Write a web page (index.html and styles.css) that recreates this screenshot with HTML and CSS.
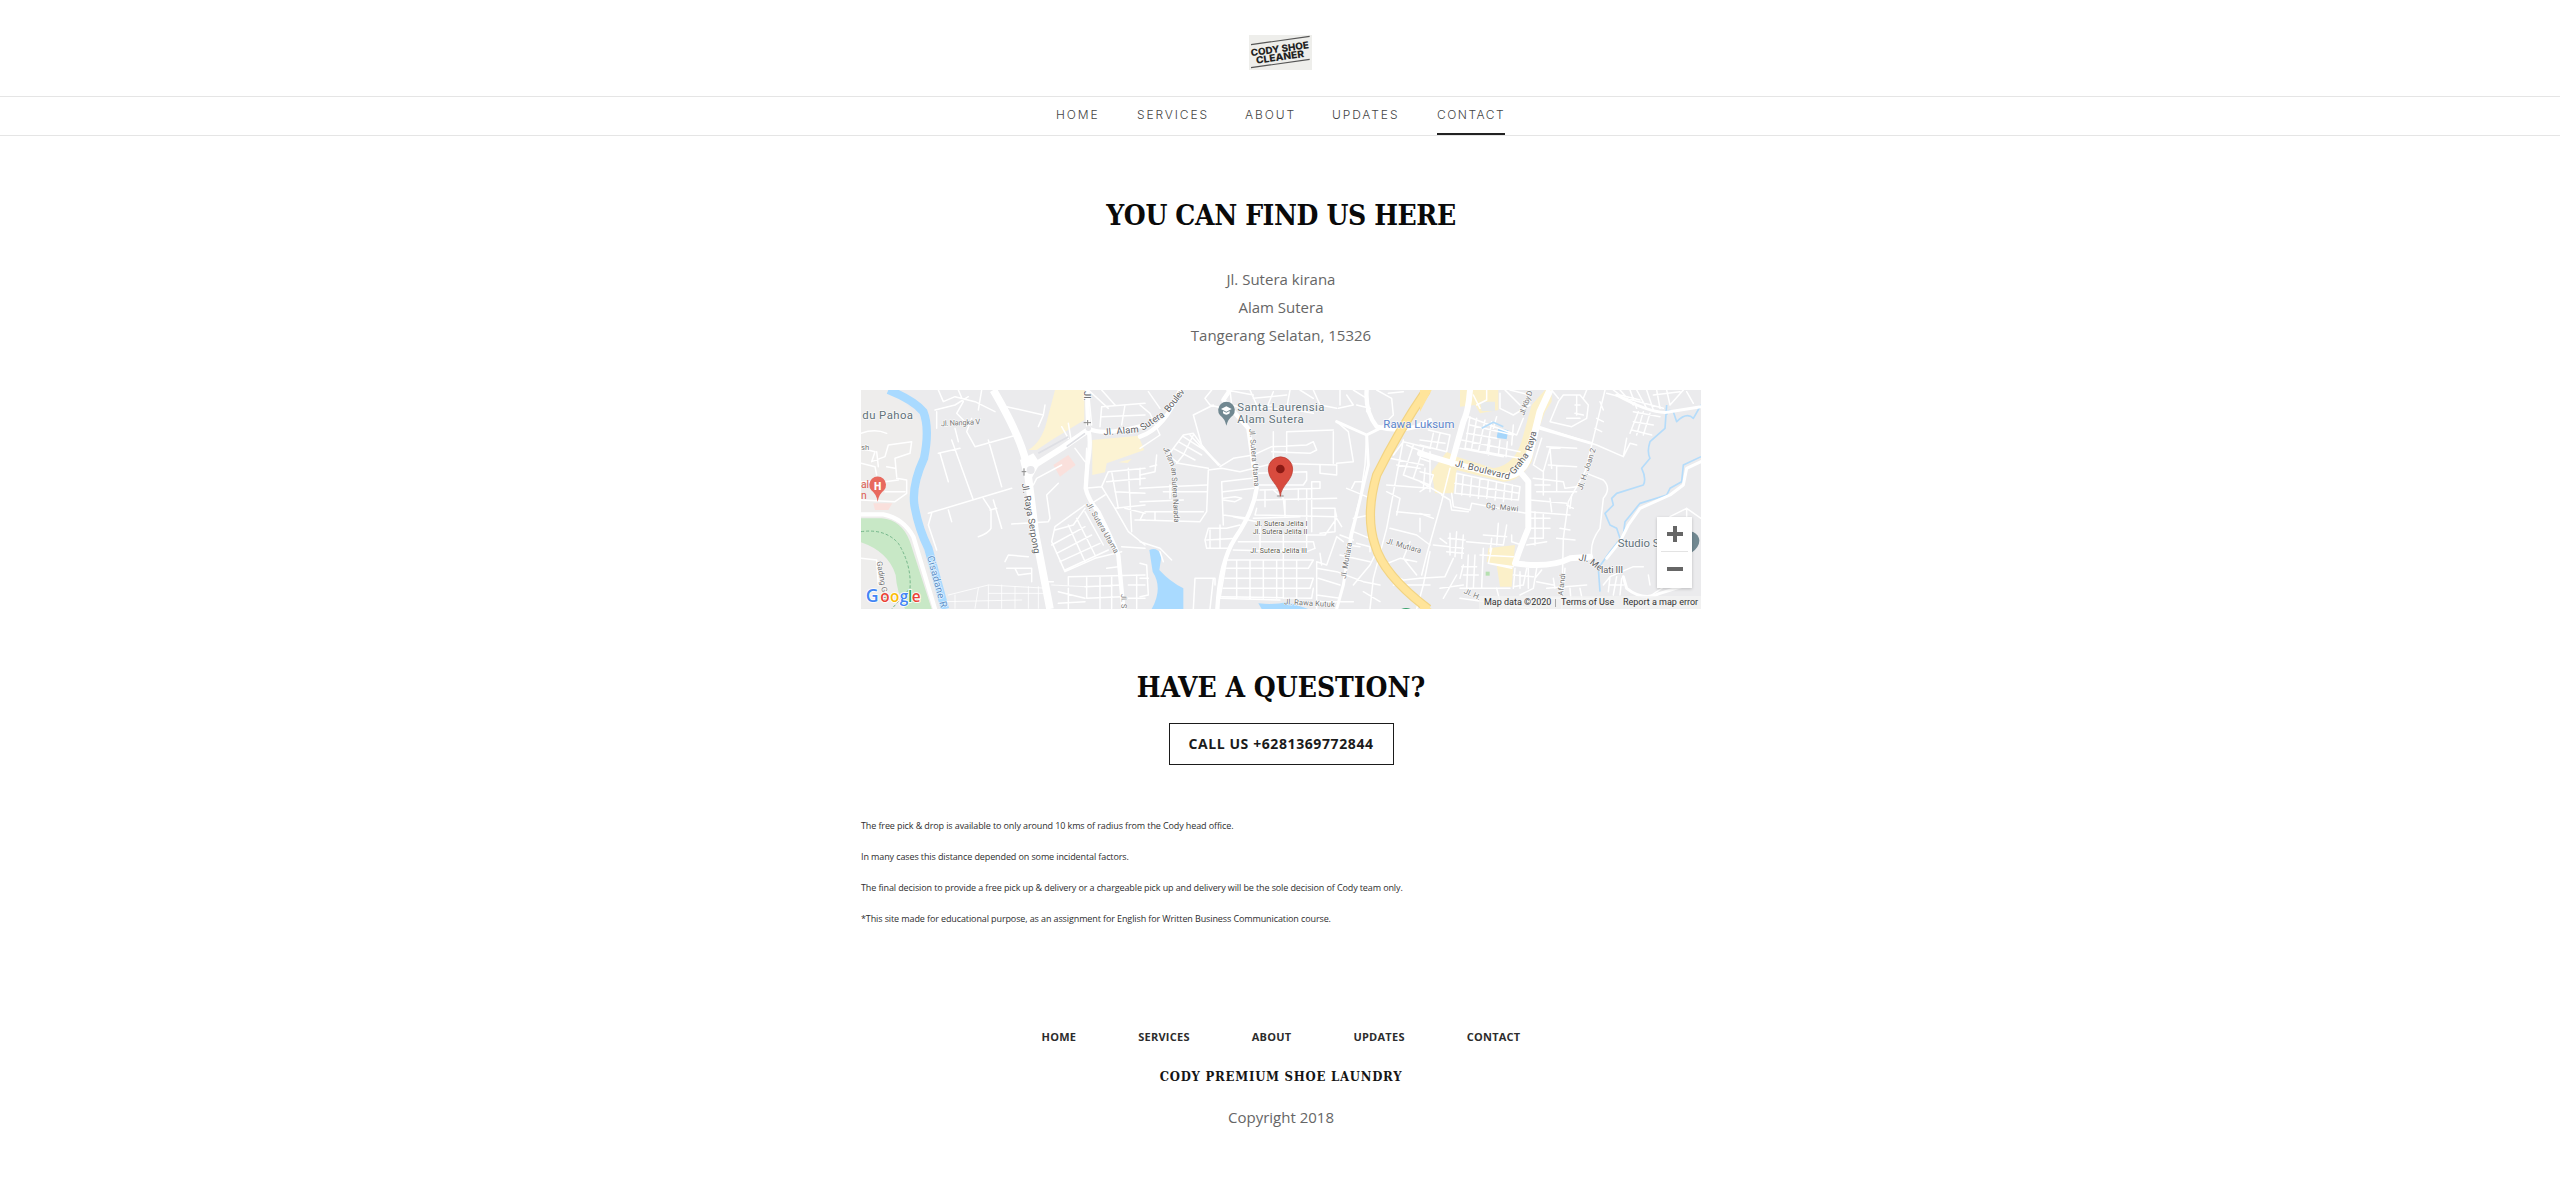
FILE: index.html
```html
<!DOCTYPE html>
<html lang="en">
<head>
<meta charset="utf-8">
<title>Contact | Cody Shoe Cleaner</title>
<link rel="stylesheet" href="styles.css">
</head>
<body>
<header class="site-header">
  <a class="logo" aria-label="Cody Shoe Cleaner">
    <svg width="63" height="35" viewBox="0 0 189 105">
      <rect width="189" height="105" fill="#eeeeeb"/>
      <path d="M6 29 182 4M6 98 182 73" stroke="#555" stroke-width="3.5"/>
      <g transform="rotate(-8 93 55)" class="logo-text">
        <text x="6" y="52" textLength="176" lengthAdjust="spacingAndGlyphs">CODY SHOE</text>
        <text x="19" y="76" textLength="145" lengthAdjust="spacingAndGlyphs">CLEANER</text>
      </g>
    </svg>
  </a>
</header>
<nav class="main-nav">
  <a class="n-home">HOME</a><a class="n-services">SERVICES</a><a class="n-about">ABOUT</a><a class="n-updates">UPDATES</a><a class="n-contact active">CONTACT</a>
</nav>
<main class="content">
  <h2 class="find">YOU CAN FIND US HERE</h2>
  <p class="address">Jl. Sutera kirana<br>Alam Sutera<br>Tangerang Selatan, 15326</p>
  <div class="map">
    <svg class="map-art" viewBox="18 15 2520 657" width="840" height="219">
      <rect x="18" y="15" width="2520" height="657" fill="#ebebed"/>
      <!-- west -->
      <g>
        <path d="M18 15H120L200 110 205 200 170 310 190 440 250 670H18Z" fill="#eeedec"/>
        <path d="M18 400H80Q140 405 165 470L230 672H150Q125 620 122 570 100 500 18 472Z" fill="#c8e8c6"/>
        <path d="M600 15H688V105L590 165 545 195H520Q560 170 575 110ZM712 165 850 152 868 195 755 235 750 262 712 270Z" fill="#fcf3d3"/>
        <path d="M790 232 830 222 818 234Z" fill="#fcf3d3"/>
        <path d="M595 240 640 210 662 240 615 275ZM55 355H112L100 375H60Z" fill="#fae0dc"/>
        <path d="M100 15Q175 45 205 80 225 130 207 220 170 300 178 360 190 430 220 490L270 672" fill="none" stroke="#a9daff" stroke-width="25"/>
        <path d="M18 440Q90 430 130 475 170 540 165 610L110 672" class="trail"/>
        <g class="road">
          <path d="M250 15 265 50 300 35 360 50 420 80M240 75 300 60 340 35M310 15 325 50 305 85 330 110M380 15 370 75M350 100 335 140 360 185 485 150M400 165 440 305M290 165 355 345M250 205 315 190M255 205 280 290M220 385 470 310M230 385 220 420 245 495M280 375 290 410M385 340 408 375 408 430Q400 445 370 455M415 345 440 430M405 375 425 370M455 65 565 90 570 60 M565 90 550 125M310 170 300 130M245 130 245 80"/>
          <path d="M18 145Q60 130 95 145M18 190 60 200 50 230 90 215 100 180 170 170 165 205 120 220 125 275M18 235 60 245 65 270M65 200 70 245M18 290H60M90 290 130 285M95 245 120 250M90 320H150M18 345 120 350 155 325 155 285 125 280M18 520 65 525 70 600"/>
          <path d="M535 300 545 280 620 240M610 295 575 330 585 400 580 410 470 417M450 530 460 510 520 515M455 550H530V590M480 550 490 570 530 565M560 540V590H595"/>
          <path d="M710 120 700 15 M735 125 740 65 870 55M740 95 870 90M700 15 760 70M740 15 780 60M810 60 800 120M695 190 690 310M660 190 690 230M640 115 650 175M620 125 640 160"/>
          <path d="M690 310 740 305 760 260 870 250M740 305 780 370 870 360M755 290 870 280M770 260 790 370M820 250 830 440M780 320 870 325M780 370 820 440 870 480M840 405 870 405M855 250V300M750 330 710 355M810 370 870 385"/>
          <path d="M690 360 600 425 590 470 630 560M600 435 655 420 690 370M590 480 690 425M605 505 710 450M615 530 735 475M630 555 760 495M640 420 690 530M665 400 720 510M690 380 745 480M630 560 720 520M720 520 800 500M800 485 870 490M755 550 790 545M640 575 870 570M690 605 800 600M695 575V640L800 635M735 575V670M770 575V670M640 575V600M610 620 690 640M610 655 690 650M640 610V670M820 600H870M820 640H870M845 570V670"/>
        </g>
        <g class="faint"><path d="M280 630 400 600 580 610M270 650 500 645M400 600V670M440 600V670M480 605V670M520 605V670M550 605V670M370 610 360 670M590 600 690 605M300 630V670M400 625H580"/></g>
        <path d="M18 388H85Q145 400 175 455L240 672" class="mid"/>
        <path d="M415 15Q500 160 515 240 530 350 540 440L585 672" fill="none" stroke="#fff" stroke-width="23"/>
        <path d="M525 250 620 190 700 135" class="main"/>
        <path d="M495 225 535 205 555 235 530 280 505 265Z" fill="#fff"/>
        <path d="M700 135 697 60V15M700 130Q745 155 870 120M700 135Q710 170 697 240L692 310Q700 345 730 380 770 460 790 510L805 672" class="mid"/>
        <path d="M550 205 640 155M635 185 690 145" stroke="#dedfe4" stroke-width="5"/>
        <circle cx="527" cy="255" r="12" fill="#e8e8eb"/><circle cx="700" cy="130" r="8" fill="#e8e8eb"/>
        <path d="M500 260H514M507 250V272M686 113H708M698 105V121" stroke="#888" stroke-width="3"/>
        <text x="22" y="101" class="poi" textLength="152">du Pahoa</text>
        <text x="18" y="195" class="street">sh</text>
        <text x="258" y="124" class="street" transform="rotate(-3 258 124)" textLength="118">Jl. Nangka V</text>
        <text x="746" y="151" class="avenue" transform="rotate(-5 746 151)" textLength="106">Jl. Alam</text>
        <text x="686" y="18" class="avenue" transform="rotate(90 686 18)">Jl.</text>
        <text x="500" y="296" class="avenue" transform="rotate(80 500 296)" textLength="214">Jl. Raya Serpong</text>
        <text x="693" y="358" class="street" transform="rotate(60 693 358)" textLength="172">Jl. Sutera Utama</text>
        <text x="798" y="627" class="street" transform="rotate(88 798 627)">Jl. S</text>
        <text x="216" y="515" class="river" transform="rotate(75 216 515)" textLength="160">Cisadane R</text>
        <text x="65" y="530" class="street" transform="rotate(80 65 530)">Gading Golf</text>
        <text x="18" y="310" class="hosp">al</text><text x="18" y="343" class="hosp">n</text>
        <path d="M68 350Q64 327 49 316A25 25 0 1 1 87 316Q72 327 68 350Z" fill="#e8695e"/>
        <text x="68" y="315" class="hosp-h">H</text>
      </g>
      <!-- centre -->
      <g transform="translate(855 0)">
        <path d="M28 495Q50 485 65 510L58 555Q90 590 130 610V672H35Q70 610 38 560ZM355 655Q410 660 440 650L505 672H365Z" fill="#a9daff"/>
        <g class="road">
          <path d="M0 190 60 150 30 85 0 60M25 20 60 70M85 210 130 150 160 145 195 195 240 240M85 210 115 235 205 250M100 190 165 225M115 170 185 210M130 155 200 200M150 150 235 240M110 235 130 210 160 150"/>
          <path d="M215 15 195 40 210 60 270 75M160 90 220 60M160 90 185 180 235 240M270 15 275 60 330 75 395 60M330 15 350 60M400 20 380 70 440 75M340 40 440 30M260 15 340 30M450 15 440 70 520 85M480 15 520 40M520 15 540 60 590 70"/>
          <path d="M240 245 280 220 340 210 395 185 500 180 520 170 530 195 510 205 395 200M205 255 245 250 300 260 400 235 590 240M400 140V240M440 140V205M440 140 580 135M580 140V235M205 255 200 380 180 410 0 405M50 210 45 260 0 270M30 245 50 240M0 310 80 305 200 300M0 350 130 345M70 320H200M15 380H190M45 380V405M90 300V340M0 405 10 385"/>
          <path d="M350 265 500 260 500 285 490 300 350 300M540 240V265L590 270V240M360 315 540 310 540 290 515 290 515 440M375 315V365M350 345 590 340M400 315 430 340 435 390M350 370 345 390 590 395 585 375M435 395 435 345M515 370 585 370V440L540 445M500 315V450L555 450 590 400 605 425M475 315V345"/>
          <path d="M250 340 285 335 305 340 285 350 250 345M245 290 335 280M245 290 250 420M250 320 340 310M250 390 325 400M205 430 260 430 300 420M205 430 195 465 200 490 270 490M210 435V490M200 465 290 460M240 420V490M280 395 350 410"/>
          <path d="M295 470 520 470 525 490 500 500 280 495M430 450 430 640M360 425V500M500 450V490M340 400 480 395M260 525 240 640 420 645M260 525 520 525 505 550 260 550M255 580 520 580 510 610 250 610M290 525V640M330 525V640M370 525V640M410 525V640M470 525V640M245 635 515 640 520 610M165 580 160 672M165 580 225 580 225 600M220 580 210 672"/>
          <path d="M0 470 60 490 95 525M0 535 20 540 25 630 0 635M0 580H25M60 500 70 530"/>
          <path d="M590 110 625 140 640 230 590 235M680 150 675 240 660 340 630 450 610 600M620 310 680 335M635 310 645 290 670 290M640 400 690 390 700 345M640 440 690 460M600 450 640 465M590 455 560 540 530 530 530 672M530 550 590 560 670 590 720 600M540 505 545 540M590 455 610 470M535 580 600 600M530 630 600 640M530 650H640M620 480 660 485M600 510 690 530M640 600 690 540 710 500M650 475 690 485 690 500"/>
          <path d="M650 60 690 70M600 15V60M620 30 640 60 595 70M640 15 680 40M710 15 755 40 760 90 730 120M680 15V80M745 25 790 20"/>
          <path d="M760 210 790 170 870 190M770 240 840 250M790 165 740 430 700 580M800 180 870 210M750 220 850 240M820 180 790 270M850 190 820 280M740 300 870 310M790 270 870 300M770 380 870 390M750 430 830 450 870 480M730 540 780 520 830 530M810 470 790 520 830 570M740 560 790 585 840 580M870 500 850 600 830 672M670 620 720 650M700 580 690 672M760 600H870M870 200V320M740 320 780 340 770 390M840 400V440"/>
        </g>
        <path d="M0 155Q75 130 120 15M270 15 250 45 290 90 325 130 350 310Q340 380 285 460 240 530 232 672M680 15Q675 80 710 125 800 150 870 105" class="mid"/>
        <path d="M680 150 685 240 635 450 610 600 590 672M590 110 680 150 730 125" class="lane"/>
        <path d="M860 15Q780 130 710 270 675 390 705 480 730 570 865 672" fill="none" stroke="#f2d484" stroke-width="28"/>
        <path d="M860 15Q780 130 710 270 675 390 705 480 730 570 865 672" fill="none" stroke="#ffe49a" stroke-width="21"/>
        <text x="8" y="137" class="avenue" transform="rotate(-33 8 137)" textLength="80">Sutera</text>
        <text x="86" y="83" class="avenue" transform="rotate(-52 86 83)" textLength="80">Boulev</text>
        <text x="69" y="190" class="street" transform="rotate(67 69 190)" textLength="60">Jl. Tam</text>
        <text x="94" y="248" class="street" transform="rotate(87 94 248)" textLength="165">an Sutera Narada</text>
        <text x="328" y="132" class="street" transform="rotate(85 328 132)" textLength="174">Jl. Sutera Utama</text>
        <g class="street dark"><text x="344" y="422" textLength="158">Jl. Sutera Jelita I</text><text x="338" y="447" textLength="164">Jl. Sutera Jelita II</text><text x="331" y="505" textLength="170">Jl. Sutera Jelita III</text></g>
        <text x="432" y="658" class="street" transform="rotate(3 432 658)" textLength="152">Jl. Rawa Kutuk</text>
        <text x="617" y="582" class="street" transform="rotate(-80 617 582)" textLength="110">Jl. Mutiara</text>
        <text x="738" y="475" class="street" transform="rotate(16 738 475)" textLength="108">Jl. Mutiara</text>
        <g class="poi"><text x="292" y="79" textLength="261">Santa Laurensia</text><text x="292" y="115" textLength="199">Alam Sutera</text></g>
        <path d="M259 122Q255 102 240 91A25 25 0 1 1 279 91Q264 102 259 122Z" fill="#718891"/>
        <path d="M243 72 259 64 275 72 259 80ZM249 78 259 83 269 78V85Q259 93 249 85Z" fill="#fff"/>
        <ellipse cx="421" cy="333" rx="11" ry="4" fill="#aaa" opacity=".7"/>
        <path d="M421 334C419 300 385 287 385 252A36.500 36.500 0 0 1 458 252C458 287 424 300 421 334Z" fill="#d84b3e" stroke="#b8372c" stroke-width="2"/>
        <circle cx="421" cy="252" r="13" fill="#8a1a14"/>
        <path d="M784 672Q798 666 812 672Z" fill="#35a06a"/>
      </g>
      <!-- east -->
      <g transform="translate(1695 0)">
        <path d="M120 15H235V75L180 85 165 60 120 65ZM375 15H395V50L375 80 350 150 335 230Q300 290 250 290L110 255 100 325 45 325 35 260 80 200 110 215 220 250Q290 240 310 150L335 60ZM205 490 285 480 275 605H240L230 540 200 530Z" fill="#fbf0c9"/>
        <path d="M180 50H225V78H185Z" fill="#e7eaeb"/><path d="M235 130 265 136 260 163 230 158Z" fill="#a6d6fb"/><rect x="197" y="560" width="12" height="12" fill="#b6e0b0"/>
        <g class="road">
          <path d="M130 90 290 150 310 100M150 95 135 190 300 220M125 165 300 200M120 190 250 215M170 100 155 190M195 105 175 200M215 110 200 205M280 120 275 180M230 95 220 130M210 165 205 210M160 30 180 70M200 15V45L170 60M240 25 240 70 280 90 330 60M255 15 300 60M270 15 330 30M150 120 280 150M140 145 230 160M240 165 235 210M262 170 258 215"/>
          <path d="M25 135 90 150 80 200M40 145 30 190M0 165 75 175M60 145 50 190M0 180 80 200M0 260 40 270 30 300 0 320M15 250 10 310M0 290 70 330M0 220 30 230"/>
          <path d="M110 265 300 305 295 345 105 325ZM105 295 298 325M130 270 125 330M155 275 150 335M180 280 175 340M205 287 200 340M230 290 225 345M255 295 250 350M278 300 274 345M95 325 100 365 150 375 155 355 320 385M65 330 90 345 95 375 145 380"/>
          <path d="M0 385 40 400M90 250 65 350 20 510 5 570M40 480 130 490M60 460 80 475M90 445 90 510M110 440 105 515M130 450 125 520M85 460 135 465M80 500 130 505M140 470 250 480M215 460 210 500M235 415 230 480M260 420 250 480M190 450 260 455M275 450V470L305 480M0 580 75 575M75 575 100 520M60 610 130 600M70 640 110 570M130 540 120 580M145 510 140 610M165 510 160 610M125 545 170 545M130 570 175 570M120 610 270 610M190 490 185 610M180 510 280 515M205 535 280 545M215 490 205 535 275 550"/>
          <path d="M415 50 390 110 455 125 500 100 505 60 480 30 430 30 415 50M470 30V90M440 100 480 100 M395 15 415 40M500 15 490 40M465 60 480 60M465 85 490 90M555 15 520 160 495 260 445 350 430 460 425 672M540 50 550 75M530 100 550 110M525 130 545 140"/>
          <path d="M360 125 530 180 610 215 630 175 650 180M620 160 610 215M500 265 550 285Q575 310 550 340L540 430Q510 470 515 510M365 160 340 240 370 260 390 190 420 190M380 185 470 190M385 240 470 245M340 280 430 290 435 310 470 305M350 320 470 320M330 345 440 355M370 260V330M345 300H390M390 190 395 250M410 245V320M325 380 450 390M330 400H390M330 430H390M330 460H370M345 380V480M370 385V460M390 340 395 380M410 460 465 465M420 430 450 435M440 360 460 370M320 480 380 470M455 330 450 370"/>
          <path d="M580 15 600 30 660 45M630 15 650 70M650 15 680 70M680 15 700 75M710 15 720 70M740 15 750 60M560 25 730 70M640 80 720 95M640 110 700 120M635 135 695 150M670 80 650 150M690 85 670 150M655 80 630 145M790 15 750 60M800 20 820 55M700 30 780 20M600 15 640 60"/>
          <path d="M285 550 280 610M320 550 310 600 280 605M350 550 340 610 300 630M280 570 340 575M365 555 345 580M300 560V610M325 550V610M380 610 500 600M400 580 405 610M435 550 430 610M450 610 455 672M480 610 490 660M350 590 400 600M380 640 550 640M550 600 570 575 640 545 670 545M570 575 565 620M590 575 580 630M605 580 600 630M570 600H610M685 570 690 600M740 600 680 640M750 395 800 370 843 400M800 370V400M120 640 350 672M230 610 240 650 330 645"/>
        </g>
        <path d="M740 90Q740 70 760 80L770 110Q800 80 820 100L843 60M740 60 735 130 690 170Q680 200 690 220L665 250Q680 280 670 300L590 325 575 340 580 360 555 385 570 420 590 430 600 460" class="water"/>
        <path d="M843 215 790 240 785 290 750 310 740 330 660 355 615 410 610 450 570 500 535 550 540 620" class="water"/>
        <path d="M185 130 220 112 250 125" class="water"/>
        <path d="M150 15Q145 80 130 110L95 235M0 205 100 235 250 275M300 260 325 290 325 430Q300 490 285 535 390 550 450 520L510 515" class="main"/>
        <path d="M250 275Q315 270 330 200L360 80 390 15" fill="none" stroke="#fff" stroke-width="21"/>
        <path d="M590 30Q690 85 740 82L843 65M843 230 800 250 790 300 750 330 660 370 625 420 600 470 560 520M610 575 620 610Q670 650 720 625L800 600M360 130 515 175" class="lane"/>
        <path d="M0 80 35 15H0ZM0 640 35 672H0Z" fill="#ffe49a"/>
        <path d="M805 440A28 28 0 0 1 838 467Q838 485 816 502Z" fill="#718891"/>
        <text x="-110" y="128" class="river bold" textLength="213">Rawa Luksum</text>
        <text x="104" y="243" class="avenue" transform="rotate(14 104 243)" textLength="168">Jl. Boulevard</text>
        <text x="282" y="270" class="avenue" transform="rotate(-52 282 270)">Graha</text>
        <text x="334" y="200" class="avenue" transform="rotate(-75 334 200)">Raya</text>
        <text x="312" y="92" class="street" transform="rotate(-70 312 92)" textLength="76">Jl. Kby D</text>
        <text x="197" y="369" class="street" transform="rotate(6 197 369)" textLength="98">Gg. Mawi</text>
        <text x="487" y="316" class="street" transform="rotate(-72 487 316)" textLength="130">Jl. H. Joan 2</text>
        <text x="130" y="624" class="street" transform="rotate(24 130 624)">Jl. H.</text>
        <text x="429" y="632" class="street" transform="rotate(-84 429 632)">Afandi</text>
        <text x="475" y="526" class="avenue" transform="rotate(10 475 526)">Jl.</text>
        <text x="508" y="535" class="avenue" transform="rotate(38 508 535)">Me</text>
        <text x="543" y="564" class="avenue" textLength="66">lati III</text>
        <text x="593" y="486" class="poi">Studio S</text>
      </g>
      <g class="glogo"><text x="32" y="651" class="cap" fill="#4285f4">G</text><text x="76" y="651" fill="#ea4335">o</text><text x="105" y="651" fill="#fbbc05">o</text><text x="134" y="651" fill="#4285f4">g</text><text x="159" y="651" fill="#34a853">l</text><text x="170" y="651" fill="#ea4335">e</text></g>
    </svg>
    <div class="zoom"><span class="plus"></span><i></i><span class="minus"></span></div>
    <div class="legal"><span class="data">Map data ©2020</span><b></b><span class="terms">Terms of Use</span><span class="report">Report a map error</span></div>
  </div>
  <h2 class="question">HAVE A QUESTION?</h2>
  <a class="call">CALL US +6281369772844</a>
  <div class="notes">
    <p>The free pick &amp; drop is available to only around 10 kms of radius from the Cody head office.</p>
    <p>In many cases this distance depended on some incidental factors.</p>
    <p>The final decision to provide a free pick up &amp; delivery or a chargeable pick up and delivery will be the sole decision of Cody team only.</p>
    <p>*This site made for educational purpose, as an assignment for English for Written Business Communication course.</p>
  </div>
</main>
<footer class="footer">
  <nav class="foot-nav"><a>HOME</a><a>SERVICES</a><a>ABOUT</a><a>UPDATES</a><a>CONTACT</a></nav>
  <h4>CODY PREMIUM SHOE LAUNDRY</h4>
  <p>Copyright 2018</p>
</footer>
</body>
</html>
```
FILE: styles.css
```css
* { box-sizing: border-box; }
body { margin: 0; background: #fff; font-family: "Open Sans", sans-serif; color: #666; }
h2, h4, p { margin: 0; }
.site-header { height: 96px; padding: 35px 0 0 1px; display: flex; justify-content: center; }
.logo { height: 35px; display: block; }
.logo svg { display: block; }
.logo-text { font: 800 29px Inter, sans-serif; fill: #222; }
.main-nav { height: 40px; padding-left: 1px; border-top: 1px solid #e5e5e5; border-bottom: 1px solid #e5e5e5; display: flex; justify-content: center; gap: 35px; font: 300 12px/36px Inter, sans-serif; color: #444; letter-spacing: 1.9px; white-space: nowrap; }
.main-nav a { height: 38px; }
.n-home { width: 46px; }
.n-services { width: 73px; }
.n-about { width: 52px; }
.n-updates { width: 70px; }
.n-contact { width: 68px; letter-spacing: 1.5px; }
.main-nav .active { border-bottom: 2px solid #222; }
.content { width: 842px; padding-left: 2px; margin: 0 auto; display: flex; flex-direction: column; align-items: center; }
h2 { font: bold 28px/40px "DejaVu Serif Condensed", "DejaVu Serif", serif; font-stretch: condensed; color: #0a0a0a; white-space: nowrap; }
.find { margin-top: 60px; letter-spacing: -.4px; }
.address { margin-top: 29px; text-align: center; font-size: 15px; line-height: 28px; }
.map { position: relative; margin-top: 41px; width: 840px; height: 219px; overflow: hidden; }
.map-art { display: block; }
.map-art text { font-family: Roboto, sans-serif; }
.road, .faint, .lane, .mid, .main { fill: none; stroke: #fff; stroke-linejoin: round; stroke-linecap: round; }
.road { stroke-width: 4.5; }
.faint { stroke-width: 2.5; }
.lane { stroke-width: 9; }
.mid { stroke-width: 13; }
.main { stroke-width: 18; }
.water { fill: none; stroke: #b5dcfa; stroke-width: 5; stroke-linejoin: round; }
.trail { fill: none; stroke: #75b78b; stroke-width: 3; stroke-dasharray: 9 6; }
.street, .avenue, .poi, .river { paint-order: stroke; stroke: #fff; stroke-opacity: .75; stroke-width: 4px; }
.street { font-size: 23px; fill: #777; }
.dark { font-size: 21.5px; fill: #5d5a50; }
.avenue { font-size: 28px; fill: #5d6063; }
.poi { font-size: 34px; fill: #607179; }
.river { font-size: 30px; fill: #5a8fc8; }
.bold { font-size: 34px; fill: #5b84cb; }
.hosp { font-size: 31px; fill: #dc5b50; }
.hosp-h { font-size: 31px; font-weight: 900; fill: #fff; text-anchor: middle; }
.map-art .glogo text { font: 600 46px "Open Sans", sans-serif; paint-order: stroke; stroke: #fff; stroke-width: 5px; }
.map-art .glogo .cap { font-size: 53px; }
.zoom { position: absolute; left: 796px; top: 127px; width: 35px; height: 71px; background: #fff; box-shadow: 0 1px 3px #0003; display: flex; flex-direction: column; align-items: center; }
.zoom i { width: 27px; height: 1px; background: #e3e3e3; }
.plus, .minus { width: 35px; height: 34px; display: grid; place-items: center; }
.plus::before, .plus::after, .minus::before { content: ""; grid-area: 1 / 1; width: 16px; height: 4px; background: #666; }
.plus::after { width: 4px; height: 16px; }
.legal { position: absolute; right: 0; bottom: 0; width: 222px; height: 13px; background: #f3f3f3b8; display: flex; padding-left: 5px; font: 9px/13px Roboto, sans-serif; color: #333; white-space: nowrap; }
.legal b { flex: none; width: 1px; height: 8px; margin: 3px 5px 0 0; background: #aaa; }
.data { flex: none; width: 71px; }
.terms { flex: none; width: 62px; }
.question { margin-top: 59px; }
.call { margin-top: 15px; width: 225px; height: 42px; border: 1px solid #1b1b1b; color: #1b1b1b; font-weight: 700; font-size: 14px; line-height: 40px; letter-spacing: .6px; text-align: center; white-space: nowrap; }
.notes { align-self: stretch; margin-top: 45px; color: #2e2e2e; font-size: 9px; line-height: 31px; letter-spacing: -.11px; white-space: nowrap; }
.footer { margin-top: 93px; padding-left: 2px; display: flex; flex-direction: column; align-items: center; }
.foot-nav { display: flex; gap: 62px; font-weight: 700; font-size: 11px; line-height: 20px; letter-spacing: .25px; color: #2c2c2c; }
.footer h4 { margin-top: 19px; font: bold 13px/22px "DejaVu Serif Condensed", "DejaVu Serif", serif; font-stretch: condensed; letter-spacing: .75px; color: #151515; }
.footer p { margin-top: 15px; font-size: 15px; line-height: 28px; }
```
